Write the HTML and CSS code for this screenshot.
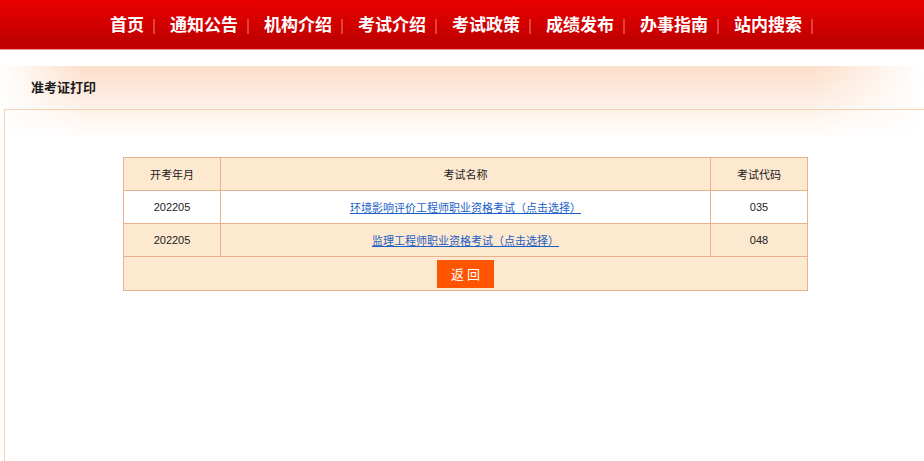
FILE: index.html
```html
<!DOCTYPE html>
<html>
<head>
  <meta charset="utf-8">
  <link rel="stylesheet" href="styles.css">
</head>
<body>
  <div class="topbar">
    <ul class="nav">
      <li><a href="#">首页</a></li>
      <li><a href="#">通知公告</a></li>
      <li><a href="#">机构介绍</a></li>
      <li><a href="#">考试介绍</a></li>
      <li><a href="#">考试政策</a></li>
      <li><a href="#">成绩发布</a></li>
      <li><a href="#">办事指南</a></li>
      <li><a href="#">站内搜索</a></li>
    </ul>
  </div>

  <div class="main">
    <div class="crumb">准考证打印</div>
    <div class="panel">
      <table class="exam-table">
        <tr class="head">
          <td class="col-month">开考年月</td>
          <td>考试名称</td>
          <td class="col-code">考试代码</td>
        </tr>
        <tr class="light">
          <td>202205</td>
          <td><a href="#">环境影响评价工程师职业资格考试（点击选择）</a></td>
          <td>035</td>
        </tr>
        <tr>
          <td>202205</td>
          <td><a href="#">监理工程师职业资格考试（点击选择）</a></td>
          <td>048</td>
        </tr>
        <tr>
          <td colspan="3" class="actions"><button class="back-btn">返回</button></td>
        </tr>
      </table>
    </div>
  </div>
</body>
</html>
```

FILE: styles.css
```css
body {
  margin: 0;
  font-family: "Liberation Sans", "Noto Sans CJK SC", sans-serif;
  background-color: #fff;
  color: #222;
  overflow: hidden;
}

.topbar {
  height: 49px;
  background: linear-gradient(#e80000, #d20000 25px, #bd0000 43px, #c60000 49px);
  border-bottom: 1px solid #ee9090;
}

.nav {
  list-style: none;
  margin: 0;
  padding: 3px 0 0 95px;
  height: 46px;
  display: flex;
  align-items: center;
}

.nav li {
  display: flex;
  align-items: center;
  padding-left: 15px;
}

.nav li::after {
  content: "";
  width: 2px;
  height: 15px;
  margin-left: 9px;
  background-color: #e2403c;
}

.nav a {
  color: #fff;
  font-size: 17px;
  font-weight: bold;
  text-decoration: none;
  line-height: 20px;
}

.main {
  margin-top: 16px;
  background:
    linear-gradient(to right, #fff, rgba(255,255,255,0) 9%, rgba(255,255,255,0) 88%, #fff),
    linear-gradient(#fddfca, #fde9db 25px, #fef2e9 43px, #fff 72px);
  background-repeat: no-repeat;
  background-size: 100% 75px;
}

.crumb {
  height: 43px;
  line-height: 43px;
  padding-left: 31px;
  font-size: 13px;
  font-weight: bold;
  color: #1d1d1d;
}

.panel {
  margin-left: 4px;
  border-top: 1px solid #f6d1b3;
  border-left: 1px solid #f8cfae;
  padding: 47px 0 0 2px;
  min-height: 320px;
}

.exam-table {
  width: 685px;
  margin: 0 auto;
  border-collapse: collapse;
  border: 1px solid #eab28c;
  background-color: #fde8d0;
  font-size: 11px;
}

.exam-table td {
  border: 1px solid #eab28c;
  height: 32px;
  padding: 0;
  text-align: center;
}

.exam-table .col-month,
.exam-table .col-code {
  width: 96px;
}

.exam-table .light {
  background-color: #fff;
}

.exam-table a {
  color: #1c5fc7;
  text-decoration: underline;
}

.exam-table .actions {
  height: 33px;
}

.back-btn {
  display: block;
  margin: 0 auto;
  width: 57px;
  height: 28px;
  border: none;
  background-color: #ff5400;
  color: #fff;
  font-family: "Liberation Sans", "Noto Sans CJK SC", sans-serif;
  font-size: 13px;
  letter-spacing: 3px;
  text-indent: 3px;
  padding: 0;
  cursor: pointer;
}
```
